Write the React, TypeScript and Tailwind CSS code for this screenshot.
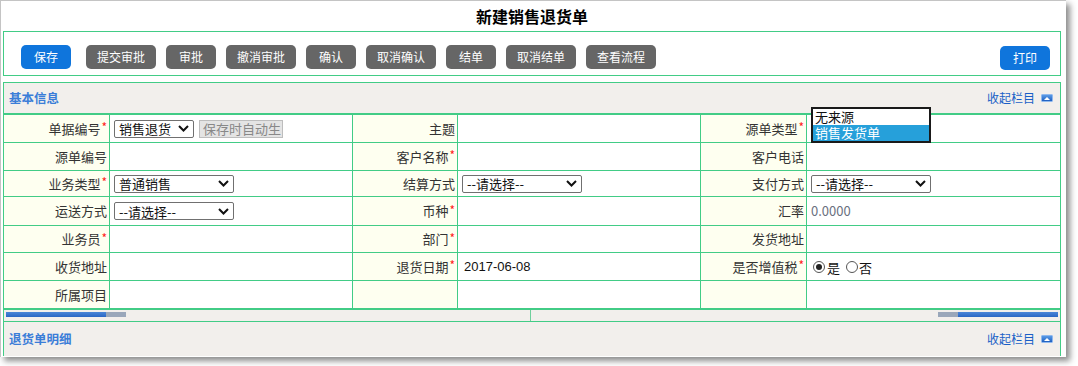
import React from "react";

const font = { fontFamily: '"Noto Sans CJK SC", "Liberation Sans", sans-serif' };

const toolButtons = ["提交审批", "审批", "撤消审批", "确认", "取消确认", "结单", "取消结单", "查看流程"];

function Btn({ label, blue }: { label: string; blue?: boolean }) {
  const w = label.length > 2 ? "w-[70px]" : "w-[50px]";
  return (
    <span
      className={`${w} h-[24px] rounded-[5px] flex items-center justify-center text-[12px] text-white ${
        blue ? "bg-[#0f75dc]" : "bg-[#666666]"
      }`}
    >
      {label}
    </span>
  );
}

function Chevron() {
  return (
    <svg width="11" height="7" viewBox="0 0 11 7" className="shrink-0">
      <path d="M1 1 L5.5 5.5 L10 1" fill="none" stroke="#111" strokeWidth="2" />
    </svg>
  );
}

function Select({ text, w }: { text: string; w: string }) {
  return (
    <span
      className={`${w} h-[18px] border border-[#707070] rounded-[2px] bg-white flex items-center justify-between pl-[4px] pr-[4px] text-[13px] text-[#111] leading-none`}
    >
      <span>{text}</span>
      <Chevron />
    </span>
  );
}

function Label({ text, req }: { text?: string; req?: boolean }) {
  return (
    <div className="h-full bg-[#fefff0] flex items-center justify-end pr-[2px] text-[13px] text-[#333]">
      {text}
      {req && <span className="text-[#ff2020] text-[12px] -mt-[3px] ml-[1px]">*</span>}
    </div>
  );
}

function Radio({ on }: { on?: boolean }) {
  return (
    <span className="w-[12px] h-[12px] rounded-full border border-[#555] bg-white flex items-center justify-center">
      {on && <span className="w-[6px] h-[6px] rounded-full bg-[#222]" />}
    </span>
  );
}

function CollapseIcon() {
  return (
    <span className="w-[12px] h-[8px] rounded-[1px] bg-gradient-to-b from-[#5a9be6] to-[#1f5fc0] border border-[#8fb8ee] flex items-center justify-center">
      <svg width="6" height="3" viewBox="0 0 6 3">
        <path d="M0 3 L3 0 L6 3 Z" fill="#fff" />
      </svg>
    </span>
  );
}

function Collapse() {
  return (
    <div className="flex items-center gap-[6px] pr-[7px]">
      <span className="text-[12px] text-[#1a5fc7]">收起栏目</span>
      <CollapseIcon />
    </div>
  );
}

type Cell = { label?: string; req?: boolean; value?: React.ReactNode };

const rows: Cell[][] = [
  [
    {
      label: "单据编号",
      req: true,
      value: (
        <div className="flex items-center gap-[5px]">
          <Select text="销售退货" w="w-[80px]" />
          <span className="w-[84px] h-[18px] bg-[#e4e4e4] border border-[#bdbdbd] text-[13px] text-[#888] leading-[16px] pl-[3px] overflow-hidden whitespace-nowrap">
            保存时自动生
          </span>
        </div>
      ),
    },
    { label: "主题" },
    { label: "源单类型", req: true },
  ],
  [{ label: "源单编号" }, { label: "客户名称", req: true }, { label: "客户电话" }],
  [
    { label: "业务类型", req: true, value: <Select text="普通销售" w="w-[120px]" /> },
    { label: "结算方式", value: <Select text="--请选择--" w="w-[120px]" /> },
    { label: "支付方式", value: <Select text="--请选择--" w="w-[120px]" /> },
  ],
  [
    { label: "运送方式", value: <Select text="--请选择--" w="w-[120px]" /> },
    { label: "币种", req: true },
    { label: "汇率", value: <span className="text-[13px] text-[#6a7080]">0.0000</span> },
  ],
  [{ label: "业务员", req: true }, { label: "部门", req: true }, { label: "发货地址" }],
  [
    { label: "收货地址" },
    {
      label: "退货日期",
      req: true,
      value: <span className="text-[13px] text-[#111] pl-[2px]" style={{ fontFamily: '"Liberation Sans", sans-serif' }}>2017-06-08</span>,
    },
    {
      label: "是否增值税",
      req: true,
      value: (
        <div className="flex items-center text-[13px] text-[#111] pl-[2px]">
          <Radio on />
          <span className="ml-[2px] mt-[2px]">是</span>
          <span className="ml-[6px]">
            <Radio />
          </span>
          <span className="ml-[1px] mt-[2px]">否</span>
        </div>
      ),
    },
  ],
  [{ label: "所属项目" }, {}, {}],
];

const heights = ["h-[28px]", "h-[28px]", "h-[26px]", "h-[29px]", "h-[27px]", "h-[28px]", "h-[29px]"];

export default function App() {
  return (
    <div className="w-[1078px] h-[366px] bg-white" style={font}>
      <div className="relative w-[1066px] h-[357px] bg-white border-l border-t border-[#c4c4c4] shadow-[4px_4px_6px_rgba(0,0,0,0.45)] overflow-hidden pl-[2px] pr-[5px]">
        <div className="h-[30px] flex items-center justify-center text-[16px] font-bold text-black">
          新建销售退货单
        </div>

        <div className="h-[45px] border border-[#42cc86] flex justify-between pt-[13px] pl-[17px] pr-[10px]">
          <div className="flex gap-[10px] items-start">
            <span className="mr-[5px]">
              <Btn label="保存" blue />
            </span>
            {toolButtons.map((b) => (
              <Btn key={b} label={b} />
            ))}
          </div>
          <div className="pt-[1px]">
            <Btn label="打印" blue />
          </div>
        </div>

        <div className="mt-[6px] border-x border-t border-[#42cc86]">
          <div className="h-[32px] bg-[#f2efec] flex items-center justify-between pl-[5px] border-b-2 border-[#42cc86]">
            <span className="text-[12.5px] font-bold text-[#3b7dd8]">基本信息</span>
            <Collapse />
          </div>

          {rows.map((r, i) => (
            <div
              key={i}
              className={`grid grid-cols-[106px_243px_105px_243px_106px_1fr] ${heights[i]} ${
                i === rows.length - 1 ? "border-b-2" : "border-b"
              } border-[#42cc86]`}
            >
              {r.map((c, j) => (
                <React.Fragment key={j}>
                  <div className="border-r border-[#42cc86]">
                    <Label text={c.label} req={c.req} />
                  </div>
                  <div
                    className={`bg-white flex items-center pl-[4px] ${
                      j < 2 ? "border-r border-[#42cc86]" : ""
                    }`}
                  >
                    {c.value}
                  </div>
                </React.Fragment>
              ))}
            </div>
          ))}

          <div className="h-[12px] bg-[#f2efec] border-b border-[#42cc86] grid grid-cols-[527px_1fr]">
            <div className="border-r border-[#6fcf9c] pl-[2px] pt-[2px]">
              <div className="flex h-[5px]">
                <span className="w-[100px] bg-gradient-to-b from-[#4a86d8] to-[#2a66c4]" />
                <span className="w-[20px] bg-[#9aa7ba]" />
              </div>
            </div>
            <div className="flex justify-end pr-[2px] pt-[2px]">
              <div className="flex h-[5px]">
                <span className="w-[20px] bg-[#9aa7ba]" />
                <span className="w-[100px] bg-gradient-to-b from-[#4a86d8] to-[#2a66c4]" />
              </div>
            </div>
          </div>

          <div className="h-[34px] bg-[#f2efec] flex items-center justify-between pl-[5px]">
            <span className="text-[12.5px] font-bold text-[#3b7dd8]">退货单明细</span>
            <Collapse />
          </div>
        </div>

        <div className="absolute left-[810px] top-[106px] w-[120px] h-[36px] border-2 border-[#1a1a1a] bg-white text-[13px] leading-[16px]">
          <div className="pl-[2px] text-[#111]">无来源</div>
          <div className="pl-[2px] bg-[#26a0da] text-white">销售发货单</div>
        </div>
      </div>
    </div>
  );
}
